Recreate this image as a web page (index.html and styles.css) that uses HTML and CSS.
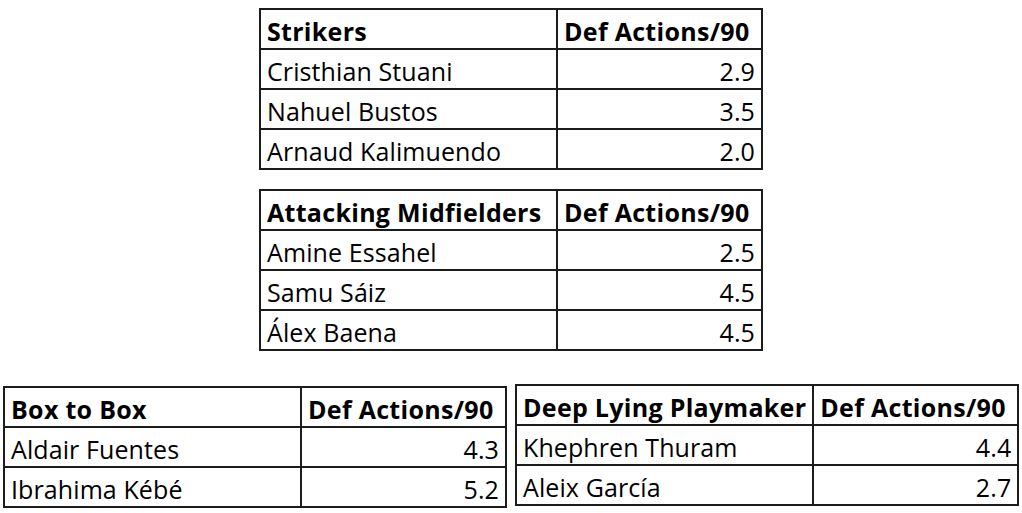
FILE: index.html
```html
<!DOCTYPE html>
<html>
<head>
<meta charset="utf-8">
<link rel="stylesheet" href="styles.css">
</head>
<body>
<div class="page">
  <div class="top">
    <table class="stats">
      <tr class="head"><td class="name">Strikers</td><td class="val">Def Actions/90</td></tr>
      <tr><td class="name">Cristhian Stuani</td><td class="num">2.9</td></tr>
      <tr><td class="name">Nahuel Bustos</td><td class="num">3.5</td></tr>
      <tr><td class="name">Arnaud Kalimuendo</td><td class="num">2.0</td></tr>
    </table>
    <table class="stats">
      <tr class="head"><td class="name">Attacking Midfielders</td><td class="val">Def Actions/90</td></tr>
      <tr><td class="name">Amine Essahel</td><td class="num">2.5</td></tr>
      <tr><td class="name">Samu Sáiz</td><td class="num">4.5</td></tr>
      <tr><td class="name">Álex Baena</td><td class="num">4.5</td></tr>
    </table>
  </div>
  <div class="bottom">
    <table class="stats low">
      <tr class="head"><td class="name">Box to Box</td><td class="val">Def Actions/90</td></tr>
      <tr><td class="name">Aldair Fuentes</td><td class="num">4.3</td></tr>
      <tr><td class="name">Ibrahima Kébé</td><td class="num">5.2</td></tr>
    </table>
    <table class="stats">
      <tr class="head"><td class="name">Deep Lying Playmaker</td><td class="val">Def Actions/90</td></tr>
      <tr><td class="name">Khephren Thuram</td><td class="num">4.4</td></tr>
      <tr><td class="name">Aleix García</td><td class="num">2.7</td></tr>
    </table>
  </div>
</div>
</body>
</html>
```
FILE: styles.css
```css
html, body {
  margin: 0;
  padding: 0;
  background: #ffffff;
}
body {
  font-family: "Open Sans", "Lato", sans-serif;
  color: #000;
  width: 1022px;
  height: 513px;
  overflow: hidden;
}
.page {
  display: flex;
  flex-direction: column;
  align-items: flex-start;
  padding-top: 8px;
}
.top {
  display: flex;
  flex-direction: column;
  align-items: flex-start;
  gap: 19px;
  padding-left: 259px;
}
.bottom {
  display: flex;
  align-items: flex-start;
  gap: 8px;
  padding-left: 3px;
  margin-top: 33px;
}
.stats {
  border-collapse: collapse;
  border: 2px solid #1c1c1c;
  font-size: 25px;
  letter-spacing: 0.1px;
}
.stats.low {
  margin-top: 2px;
}
.stats td {
  border: 2px solid #1c1c1c;
  height: 36px;
  padding: 0 6px 2px 6px;
  vertical-align: bottom;
  line-height: 30px;
  white-space: nowrap;
}
.stats td.name {
  width: 283px;
}
.stats td.val,
.stats td.num {
  width: 191px;
  text-align: right;
}
.stats tr.head td {
  font-weight: bold;
  letter-spacing: 0.3px;
}
.stats tr.head td.val {
  text-align: left;
  padding-left: 6px;
}
```
